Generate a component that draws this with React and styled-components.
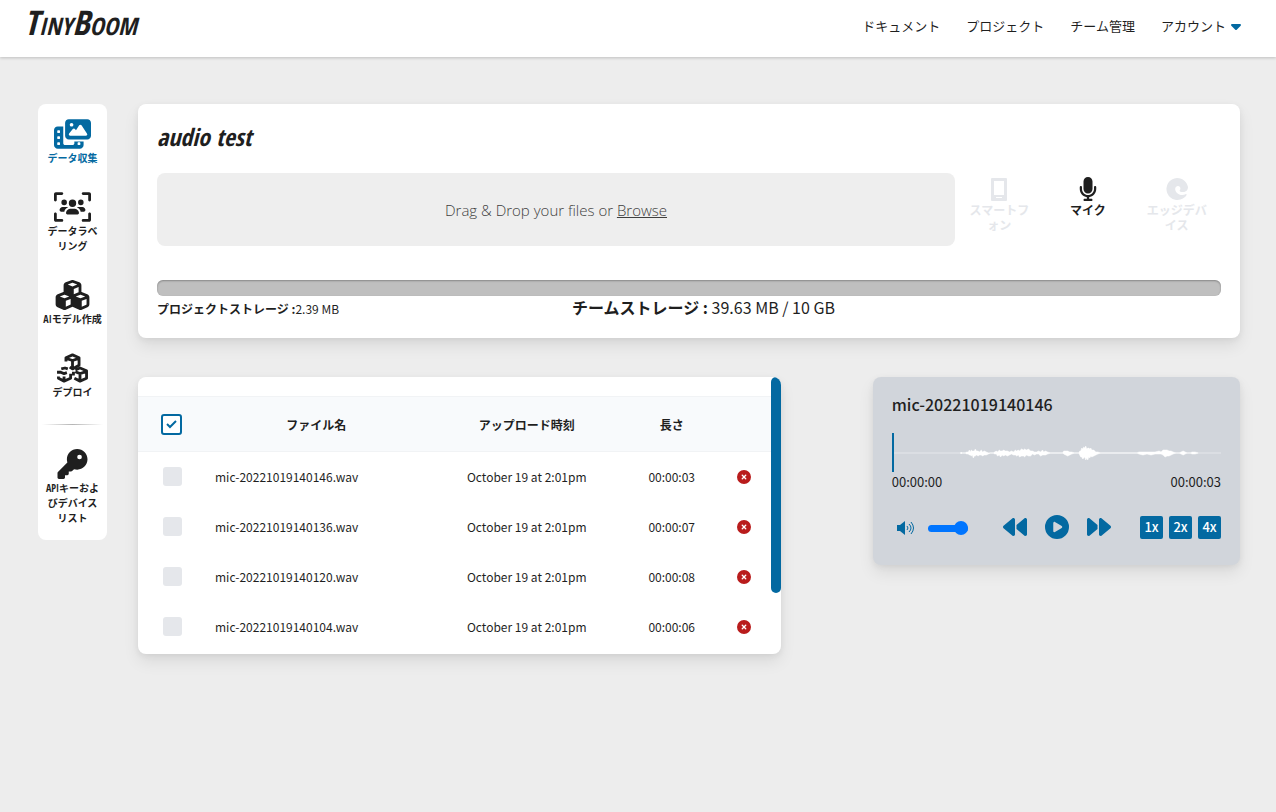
import React from "react";
import styled, { createGlobalStyle } from "styled-components";
import {
  FaBackward,
  FaCaretDown,
  FaCirclePlay,
  FaCircleXmark,
  FaCubes,
  FaForward,
  FaKey,
  FaMicrophone,
  FaPhotoFilm,
  FaUsersViewfinder,
} from "react-icons/fa6";

const MENU = [
  { title: "データ収集", icon: <FaPhotoFilm />, active: true },
  { title: "データラベリング", icon: <FaUsersViewfinder /> },
  { title: "AIモデル作成", icon: <FaCubes /> },
  { title: "デプロイ", icon: <DeployIcon /> },
];

const FILES = [
  { name: "mic-20221019140146.wav", date: "October 19 at 2:01pm", length: "00:00:03" },
  { name: "mic-20221019140136.wav", date: "October 19 at 2:01pm", length: "00:00:07" },
  { name: "mic-20221019140120.wav", date: "October 19 at 2:01pm", length: "00:00:08" },
  { name: "mic-20221019140104.wav", date: "October 19 at 2:01pm", length: "00:00:06" },
];

// [x, height above the line, height below the line]
const WAVE = [
  [68, 0, 0], [69, 1, 1], [70, 0, 0], [73, 0, 0], [74, 1, 1], [76, 1, 1], [77, 3, 2], [78, 1, 2], [79, 3, 3], [80, 2, 2], [81, 2, 5],
  [82, 2, 3], [83, 4, 3], [84, 2, 2], [86, 2, 3], [87, 1, 2], [89, 3, 2], [90, 1, 3], [92, 2, 2], [94, 1, 2], [96, 0, 1], [98, 0, 0],
  [101, 0, 0], [102, 1, 1], [104, 2, 1], [105, 1, 3], [107, 3, 2], [108, 2, 4], [110, 2, 2], [111, 3, 3], [113, 2, 2], [115, 2, 3],
  [117, 1, 2], [119, 2, 1], [121, 1, 2], [123, 3, 2], [124, 2, 3], [126, 3, 2], [127, 2, 4], [129, 4, 3], [131, 3, 3], [132, 4, 4],
  [134, 3, 2], [136, 4, 3], [138, 2, 3], [140, 2, 1], [142, 1, 2], [144, 1, 1], [146, 2, 1], [148, 1, 3], [150, 3, 2], [151, 1, 2],
  [153, 2, 2], [155, 1, 1], [158, 0, 0], [170, 0, 0], [171, 2, 1], [173, 2, 2], [175, 2, 3], [177, 1, 2], [179, 1, 1], [182, 0, 0],
  [186, 0, 0], [187, 2, 2], [188, 2, 4], [189, 5, 4], [190, 4, 6], [191, 6, 5], [192, 5, 4], [193, 7, 7], [194, 4, 5], [195, 5, 7],
  [196, 5, 4], [197, 4, 5], [198, 5, 3], [199, 3, 4], [201, 3, 3], [203, 1, 2], [205, 1, 1], [208, 0, 0],
  [244, 0, 0], [246, 1, 1], [250, 1, 2], [254, 1, 1], [258, 1, 2], [262, 1, 1], [266, 2, 1], [268, 1, 1], [270, 3, 2], [272, 3, 4],
  [274, 3, 3], [276, 2, 3], [278, 2, 2], [280, 1, 1], [283, 0, 0], [286, 0, 0], [288, 1, 1], [290, 2, 2], [292, 1, 1], [294, 0, 0],
  [297, 0, 0], [299, 1, 1], [302, 1, 1], [305, 0, 0],
];

// three outlined cubes with broken edges
function DeployIcon() {
  return (
    <svg viewBox="0 0 36 32" fill="none" stroke="currentColor" strokeWidth="3" strokeLinejoin="round">
      <path d="M11 9V5l7-3 7 3v8l-7 4-3-2M12 6l6 2 6-2M18 8v8" />
      <path d="M6 17l4-1 3 1M3 19v3M3 25v2l6 3 7-3v-5M4 20l5 2 3-1M9 25v4" />
      <path d="M19 24v-4M21 18l5-2 7 3v8l-7 3-6-3M21 20l5 2 6-2M26 22v7" />
    </svg>
  );
}

const PhoneIcon = () => (
  <svg viewBox="0 0 24 24" fill="currentColor" fillRule="evenodd">
    <path d="M5 1h14a1 1 0 0 1 1 1v21a1 1 0 0 1-1 1H5a1 1 0 0 1-1-1V2a1 1 0 0 1 1-1zM7 4v14h10V4zM9 20v1h6v-1z" />
  </svg>
);

const EdgeIcon = () => (
  <svg viewBox="0 0 24 24" fill="currentColor">
    <path d="M12 1a11 11 0 1 0 8 19c2-2 2-3 1-3-3 2-7 1-9-1-3-3-2-7 1-7 2 0 3 2 2 4-1 1 0 2 3 2 3 0 5-2 5-5C22 5 18 1 12 1z" />
    <path d="M13 10c-2 1-2 4 0 6 2 1 5 1 8-1" fill="none" stroke="white" strokeWidth="1" />
  </svg>
);

const VolumeIcon = () => (
  <svg viewBox="0 0 18 14" fill="none" stroke="currentColor">
    <path d="M0 4h3l5-4v14l-5-4H0z" fill="currentColor" stroke="none" />
    <path d="M10 5q2 2 0 4M12 3q4 4 0 8M14 1q5 6 0 12" />
  </svg>
);

const Waveform = () => {
  const top = WAVE.map(([x, up]) => `${x},${20 - up}`);
  const bottom = [...WAVE].reverse().map(([x, , down]) => `${x},${20 + down}`);

  return (
    <WaveSvg viewBox="0 0 328 39" preserveAspectRatio="none" aria-hidden="true">
      <path d="M0 20H328" stroke="#e6e8ec" />
      <polygon points={[...top, ...bottom].join(" ")} fill="#fff" stroke="#fff" strokeWidth="0.5" />
      <path d="M1 0V39" stroke="#0369a1" strokeWidth="2" />
    </WaveSvg>
  );
};

const App = () => {
  return (
    <>
      <GlobalStyle />
      <Header>
        <Logo href="#">TinyBoom</Logo>
        <Nav>
          <NavLink href="#">ドキュメント</NavLink>
          <NavLink href="#">プロジェクト</NavLink>
          <NavLink href="#">チーム管理</NavLink>
          <NavLink href="#">
            アカウント
            <FaCaretDown />
          </NavLink>
        </Nav>
      </Header>
      <Layout>
        <Sidebar>
          {MENU.map((item) => (
            <MenuLink href="#" key={item.title} $active={item.active}>
              {item.icon}
              <span>{item.title}</span>
            </MenuLink>
          ))}
          <Divider />
          <MenuLink href="#">
            <FaKey />
            <span>APIキーおよびデバイスリスト</span>
          </MenuLink>
        </Sidebar>
        <Main>
          <ProjectCard>
            <Title>audio test</Title>
            <UploadRow>
              <DropZone>
                <span>
                  Drag &amp; Drop your files or <a href="#">Browse</a>
                </span>
              </DropZone>
              <Devices>
                <DeviceButton type="button" disabled>
                  <PhoneIcon />
                  <span>スマートフォン</span>
                </DeviceButton>
                <DeviceButton type="button">
                  <FaMicrophone />
                  <span>マイク</span>
                </DeviceButton>
                <DeviceButton type="button" disabled>
                  <EdgeIcon />
                  <span>エッジデバイス</span>
                </DeviceButton>
              </Devices>
            </UploadRow>
            <StorageBar />
            <StorageInfo>
              <ProjectStorage>
                <b>プロジェクトストレージ :</b>2.39 MB
              </ProjectStorage>
              <TeamStorage>
                <b>チームストレージ :</b> 39.63 MB / 10 GB
              </TeamStorage>
            </StorageInfo>
          </ProjectCard>
          <Content>
            <TableCard>
              <Table>
                <colgroup>
                  <col width="67" />
                  <col />
                  <col width="198" />
                  <col width="92" />
                  <col width="53" />
                </colgroup>
                <thead>
                  <tr>
                    <th>
                      <CheckAll type="checkbox" defaultChecked aria-label="すべて選択" />
                    </th>
                    <th>ファイル名</th>
                    <th>アップロード時刻</th>
                    <th>長さ</th>
                    <th />
                  </tr>
                </thead>
                <tbody>
                  {FILES.map((file) => (
                    <tr key={file.name}>
                      <td>
                        <RowCheck type="checkbox" aria-label={file.name} />
                      </td>
                      <NameCell>{file.name}</NameCell>
                      <td>{file.date}</td>
                      <td>{file.length}</td>
                      <td>
                        <DeleteButton type="button" aria-label="削除">
                          <FaCircleXmark />
                        </DeleteButton>
                      </td>
                    </tr>
                  ))}
                </tbody>
              </Table>
              <ScrollThumb />
            </TableCard>
            <Player>
              <PlayerTitle>mic-20221019140146</PlayerTitle>
              <Waveform />
              <Times>
                <span>00:00:00</span>
                <span>00:00:03</span>
              </Times>
              <Controls>
                <Volume>
                  <VolumeIcon />
                  <VolumeRange type="range" defaultValue="100" aria-label="音量" />
                </Volume>
                <Playback>
                  <IconButton type="button" aria-label="戻る">
                    <FaBackward />
                  </IconButton>
                  <IconButton type="button" aria-label="再生">
                    <FaCirclePlay />
                  </IconButton>
                  <IconButton type="button" aria-label="進む">
                    <FaForward />
                  </IconButton>
                </Playback>
                <Speeds>
                  <SpeedButton type="button">1x</SpeedButton>
                  <SpeedButton type="button">2x</SpeedButton>
                  <SpeedButton type="button">4x</SpeedButton>
                </Speeds>
              </Controls>
            </Player>
          </Content>
        </Main>
      </Layout>
    </>
  );
};

const GlobalStyle = createGlobalStyle`
  * {
    box-sizing: border-box;
  }

  body {
    margin: 0;
    background-color: #ededed;
    color: #1f1f1f;
    font-family: "Noto Sans CJK JP", sans-serif;
    font-size: 16px;
  }

  a {
    color: inherit;
    text-decoration: none;
  }

  button {
    padding: 0;
    border: none;
    background: none;
    color: inherit;
    font: inherit;
    cursor: pointer;
  }

  svg {
    display: block;
    flex-shrink: 0;
  }
`;

const Header = styled.header`
  display: flex;
  justify-content: space-between;
  height: 57px;
  padding: 0 32px 0 24px;
  background-color: white;
  box-shadow: 0 1px 3px rgba(0, 0, 0, 0.2);
`;

const Logo = styled.a`
  font-family: "Open Sans Condensed", "Roboto Condensed", "Liberation Sans Narrow", sans-serif;
  font-size: 34px;
  font-style: italic;
  font-weight: bold;
  font-variant: small-caps;
  line-height: 45px;
`;

const Nav = styled.nav`
  display: flex;
  align-items: center;
  gap: 26px;
  height: 51px;
`;

const NavLink = styled.a`
  display: flex;
  align-items: center;
  gap: 2px;
  font-size: 13px;

  svg {
    width: 16px;
    height: 16px;
    color: #0369a1;
  }
`;

const Layout = styled.div`
  display: flex;
  align-items: flex-start;
  gap: 31px;
  padding: 47px 36px 47px 38px;
`;

const Sidebar = styled.aside`
  display: flex;
  flex-direction: column;
  gap: 26px;
  width: 69px;
  flex-shrink: 0;
  padding: 15px 4px 14px;
  border-radius: 8px;
  background-color: white;
`;

const MenuLink = styled.a`
  display: flex;
  flex-direction: column;
  align-items: center;
  gap: 2px;
  color: ${(props) => (props.$active ? "#0369a1" : "inherit")};
  font-family: "Open Sans Condensed", "Roboto Condensed", "Liberation Sans Narrow", "Noto Sans CJK JP", sans-serif;
  font-size: 10px;
  font-weight: bold;
  line-height: 15px;
  text-align: center;

  span {
    max-width: 59px;
  }

  svg {
    width: 37px;
    height: 30px;
  }
`;

const Divider = styled.hr`
  width: 100%;
  height: 1px;
  margin: -2px 0;
  border: none;
  background: linear-gradient(to right, transparent, #b5b5b5, transparent);
`;

const Main = styled.main`
  flex: 1;
  min-width: 0;
`;

const Card = styled.section`
  border-radius: 8px;
  background-color: white;
  box-shadow: 0 8px 16px rgba(0, 0, 0, 0.08), 0 2px 6px rgba(0, 0, 0, 0.06);
`;

const ProjectCard = styled(Card)`
  padding: 16px 19px;
`;

const Title = styled.h1`
  margin: 0 0 19px;
  font-family: "Open Sans Condensed", "Roboto Condensed", "Liberation Sans Narrow", sans-serif;
  font-size: 24px;
  font-style: italic;
  line-height: 34px;
`;

const UploadRow = styled.div`
  display: grid;
  grid-template-columns: 3fr 1fr;
  align-items: start;
`;

const DropZone = styled.div`
  display: flex;
  align-items: center;
  justify-content: center;
  height: 73px;
  border-radius: 8px;
  background-color: #eeeeee;
  color: #3f3f3f;
  font-family: "Open Sans", sans-serif;
  font-size: 15px;
  font-weight: 300;

  a {
    text-decoration: underline;
  }
`;

const Devices = styled.div`
  display: grid;
  grid-template-columns: repeat(3, 1fr);
`;

const DeviceButton = styled.button`
  display: flex;
  flex-direction: column;
  align-items: center;
  gap: 1px;
  padding: 4px 14px 0;
  color: ${(props) => (props.disabled ? "#e5e7eb" : "inherit")};
  font-size: 12px;
  font-weight: bold;
  line-height: 15px;

  svg {
    width: 24px;
    height: 24px;
  }
`;

const StorageBar = styled.div`
  height: 16px;
  margin-top: 34px;
  border-radius: 6px;
  background-color: #bfbfbf;
  box-shadow: inset 0 1px 2px rgba(0, 0, 0, 0.3);
`;

const StorageInfo = styled.div`
  display: grid;
  grid-template-columns: 39% 1fr;
  line-height: 26px;
`;

const ProjectStorage = styled.span`
  font-size: 12px;
`;

const TeamStorage = styled.span`
  font-size: 16px;
  line-height: 23px;
`;

const Content = styled.div`
  display: grid;
  grid-template-columns: 7fr 4fr;
  gap: 92px;
  align-items: start;
  margin-top: 39px;
`;

const TableCard = styled(Card)`
  display: flex;
  align-items: flex-start;
  padding-bottom: 2px;
  overflow: hidden;
`;

const Table = styled.table`
  flex: 1;
  margin-top: 19px;
  border-collapse: collapse;
  table-layout: fixed;
  font-size: 12px;
  text-align: center;

  tr {
    height: 50px;
  }

  thead tr {
    height: 55px;
    border-top: 1px solid #f1f3f5;
    border-bottom: 1px solid #f1f3f5;
    background-color: #f8fafc;
  }

  th,
  td {
    padding: 0;
  }
`;

const NameCell = styled.td`
  && {
    padding-left: 10px;
    text-align: left;
  }
`;

const CheckAll = styled.input`
  display: block;
  appearance: none;
  width: 21px;
  height: 21px;
  margin: 0 auto;
  border: 2px solid #0369a1;
  border-radius: 3px;
  background: white
    url("data:image/svg+xml,%3Csvg xmlns='http://www.w3.org/2000/svg' viewBox='0 0 17 17' fill='none' stroke='%230369a1' stroke-width='2'%3E%3Cpath d='M4 8l3 3 6-6'/%3E%3C/svg%3E");
`;

const RowCheck = styled.input`
  display: block;
  appearance: none;
  width: 19px;
  height: 19px;
  margin: 0 auto 0 25px;
  border-radius: 3px;
  background-color: #e5e7eb;
`;

const DeleteButton = styled.button`
  display: block;
  margin: 0 auto;
  color: #b91c1c;
  font-size: 14px;
`;

const ScrollThumb = styled.div`
  width: 10px;
  height: 216px;
  border-radius: 5px;
  background-color: #0369a1;
`;

const Player = styled(Card)`
  padding: 15px 19px 26px;
  background-color: #d1d5db;
`;

const PlayerTitle = styled.h2`
  margin: 0 0 16px;
  font-size: 16px;
  font-weight: 500;
  line-height: 25px;
`;

const WaveSvg = styled.svg`
  width: 100%;
  height: 39px;
`;

const Times = styled.div`
  display: flex;
  justify-content: space-between;
  font-size: 13px;
  line-height: 19px;
`;

const Controls = styled.div`
  display: flex;
  align-items: center;
  justify-content: space-between;
  height: 24px;
  margin-top: 24px;
  color: #0369a1;
`;

const Volume = styled.div`
  display: flex;
  align-items: center;
  gap: 13px;
  padding: 2px 6px 0 5px;

  svg {
    width: 18px;
    height: 14px;
  }
`;

const VolumeRange = styled.input`
  appearance: none;
  width: 40px;
  height: 7px;
  margin: 0;
  border-radius: 4px;
  background-color: #0075ff;

  &::-webkit-slider-thumb {
    appearance: none;
    width: 14px;
    height: 14px;
    border-radius: 50%;
    background-color: #0075ff;
  }
`;

const Playback = styled.div`
  display: flex;
  gap: 18px;
`;

const IconButton = styled.button`
  font-size: 24px;
`;

const Speeds = styled.div`
  display: flex;
  gap: 6px;
`;

const SpeedButton = styled.button`
  width: 23px;
  height: 23px;
  border-radius: 2px;
  background-color: #0369a1;
  color: white;
  font-size: 13px;
  font-weight: 500;
  line-height: 22px;
`;

export default App;
